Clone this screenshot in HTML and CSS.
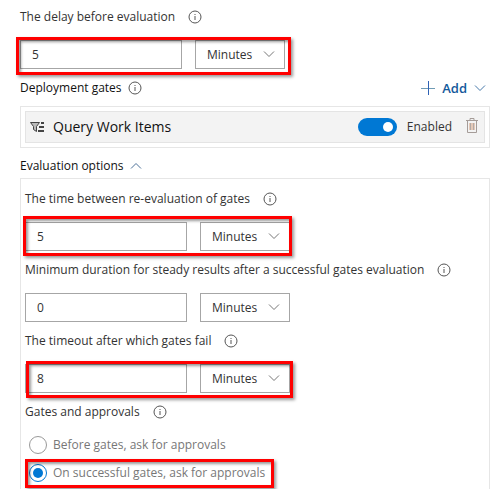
FILE: index.html
```html
<!DOCTYPE html>
<html lang="en">
<head>
<meta charset="utf-8">
<meta name="viewport" content="width=device-width, initial-scale=1">
<title>Deployment gates</title>
<link rel="stylesheet" href="styles.css">
</head>
<body>
<svg class="sprite" aria-hidden="true">
  <symbol id="info" viewBox="0 0 14 14">
    <circle cx="7" cy="7" r="6" fill="none" stroke="currentColor"/>
    <path d="M7 6v4M7 4v1" fill="none" stroke="currentColor"/>
  </symbol>
  <symbol id="chevron" viewBox="0 0 12 8">
    <path d="M1 1.5l5 5 5-5" fill="none" stroke="currentColor"/>
  </symbol>
</svg>
<main class="gates">
  <div class="field">
    <div class="field-label"><label for="delay">The delay before evaluation</label><svg class="info"><use href="#info"/></svg></div>
    <div class="controls">
      <input class="number" id="delay" type="text" value="5">
      <div class="unit"><select aria-label="Delay unit"><option>Minutes</option></select><svg class="chevron"><use href="#chevron"/></svg></div>
      <span class="highlight highlight-delay"></span>
    </div>
  </div>

  <section>
    <div class="section-head">
      <h2>Deployment gates</h2><svg class="info"><use href="#info"/></svg>
      <button class="add" type="button">
        <svg class="plus" viewBox="0 0 14 14"><path d="M0 7.5h14" stroke="#6f9bb5"/><path d="M7.5 0v14" stroke="#2f62b5"/></svg>
        <span>Add</span>
        <svg class="chevron"><use href="#chevron"/></svg>
      </button>
    </div>
    <div class="gate-list">
      <div class="gate">
        <svg class="query" viewBox="0 0 15 12"><path d="M0.500 1.500h9L6.500 5.500v5l-3-2v-3z" fill="#bbb" stroke="#444"/><path d="M11 2h3M9 6h5M8 10h6" fill="none" stroke="#444" stroke-width="2"/></svg>
        <span class="gate-name">Query Work Items</span>
        <input class="toggle" id="enabled" type="checkbox" role="switch" checked>
        <label for="enabled">Enabled</label>
        <button class="trash" type="button" aria-label="Delete gate">
          <svg viewBox="0 0 12 15"><path d="M0 2.500h12M4 2.500v-2h4v2M1.500 3v11.500h9V3" fill="none" stroke="#a59c98"/><path d="M3 5h6v7H3z" fill="#e5c9b8"/><path d="M4.500 5v7M7.500 5v7" stroke="#b3aaa5"/></svg>
        </button>
      </div>
    </div>
  </section>

  <section>
    <button class="collapse" type="button" aria-expanded="true">Evaluation options<svg class="chevron up"><use href="#chevron"/></svg></button>
    <div class="options">
      <div class="field">
        <div class="field-label"><label for="interval">The time between re-evaluation of gates</label><svg class="info"><use href="#info"/></svg></div>
        <div class="controls">
          <input class="number" id="interval" type="text" value="5">
          <div class="unit"><select aria-label="Interval unit"><option>Minutes</option></select><svg class="chevron"><use href="#chevron"/></svg></div>
          <span class="highlight highlight-interval"></span>
        </div>
      </div>
      <div class="field">
        <div class="field-label"><label for="steady">Minimum duration for steady results after a successful gates evaluation</label><svg class="info"><use href="#info"/></svg></div>
        <div class="controls">
          <input class="number" id="steady" type="text" value="0">
          <div class="unit"><select aria-label="Duration unit"><option>Minutes</option></select><svg class="chevron"><use href="#chevron"/></svg></div>
        </div>
      </div>
      <div class="field">
        <div class="field-label"><label for="timeout">The timeout after which gates fail</label><svg class="info"><use href="#info"/></svg></div>
        <div class="controls">
          <input class="number" id="timeout" type="text" value="8">
          <div class="unit"><select aria-label="Timeout unit"><option>Minutes</option></select><svg class="chevron"><use href="#chevron"/></svg></div>
          <span class="highlight highlight-timeout"></span>
        </div>
      </div>
      <div class="approvals" role="radiogroup" aria-labelledby="approvals-label">
        <div class="field-label"><span id="approvals-label">Gates and approvals</span><svg class="info"><use href="#info"/></svg></div>
        <div class="choice"><input id="before" type="radio" name="approvals"><label for="before">Before gates, ask for approvals</label></div>
        <div class="choice"><input id="after" type="radio" name="approvals" checked><label for="after">On successful gates, ask for approvals</label><span class="highlight highlight-choice"></span></div>
      </div>
    </div>
  </section>
</main>
</body>
</html>
```
FILE: styles.css
```css
* { box-sizing: border-box; }
body {
  margin: 0;
  background: #fff;
  color: #333;
  font: 12px/18px "Open Sans", "Noto Sans", sans-serif;
}
input, select, button { font: inherit; color: inherit; margin: 0; }
button { display: flex; align-items: center; padding: 0; border: 0; background: none; }
h2 { margin: 0; font-size: 12px; font-weight: 400; color: #111; }
.sprite { position: absolute; width: 0; height: 0; }
.gates { padding: 8px 4px 0 20px; }
.info { width: 14px; height: 14px; color: #555; }
.chevron { width: 12px; height: 8px; color: #777; }

.field { margin-bottom: 10px; }
.field-label { display: flex; align-items: center; gap: 13px; height: 18px; margin-bottom: 14px; }
.controls { position: relative; display: flex; gap: 13px; width: fit-content; }
.number {
  width: 162px;
  height: 29px;
  padding: 0 11px;
  border: 1px solid #a6a6a6;
  background: #fff;
}
.unit { position: relative; }
.unit select {
  display: block;
  width: 90px;
  height: 29px;
  padding: 0 11px;
  border: 1px solid #a6a6a6;
  border-radius: 0;
  background: #fff;
  appearance: none;
}
.unit .chevron { position: absolute; right: 10px; top: 10px; pointer-events: none; }

.highlight {
  position: absolute;
  border: 3px solid #ff0000;
  box-shadow: 2px 2px 3px rgba(0, 0, 0, .4), inset 2px 2px 3px rgba(0, 0, 0, .4);
  pointer-events: none;
}
.highlight-delay { inset: -3px -6px -6px -4px; }
.highlight-interval { inset: -6px -2px -5px -2px; }
.highlight-timeout { inset: -3px -3px -5px 1px; }
.highlight-choice { inset: -5px -9px -6px -4px; }

.section-head { display: flex; align-items: center; gap: 6px; height: 18px; margin-bottom: 9px; }
.add { gap: 7px; margin-left: auto; padding-right: 4px; color: #13599b; font-size: 13px; font-weight: 600; }
.add .chevron { color: #4779aa; }
.plus { width: 14px; height: 14px; }
.gate-list { padding: 4px; border: 1px solid #e6e6e6; }
.gate {
  display: flex;
  align-items: center;
  height: 32px;
  padding: 0 6px 0 4px;
  border: 1px solid #e4e4e4;
  background: #f3f3f3;
}
.query { width: 15px; height: 12px; margin-right: 8px; }
.gate-name { margin-right: auto; color: #111; font-size: 14px; }
.toggle {
  display: flex;
  align-items: center;
  justify-content: flex-end;
  width: 39px;
  height: 18px;
  margin-right: 10px;
  padding: 0 4px;
  border-radius: 9px;
  background: #0078d4;
  appearance: none;
}
.toggle::before { content: ""; width: 10px; height: 10px; border-radius: 50%; background: #fff; }
.trash { margin: 0 0 4px 14px; }
.trash svg { width: 12px; height: 15px; }

.collapse { gap: 6px; height: 18px; margin: 9px 0 3px; color: #111; }
.collapse .chevron { color: #4d7199; }
.up { transform: rotate(180deg); }
.options { padding: 11px 4px 7px; border: 1px solid #e6e6e6; border-bottom: 0; }
.approvals .field-label { margin-bottom: 15px; }
.choice {
  position: relative;
  display: flex;
  align-items: center;
  gap: 6px;
  width: fit-content;
  height: 18px;
  margin: 0 0 10px 4px;
  color: #777;
}
.choice:last-child { margin-bottom: 0; }
.choice input {
  display: grid;
  place-items: center;
  width: 18px;
  height: 18px;
  border: 1px solid #999;
  border-radius: 50%;
  background: #fff;
  appearance: none;
}
.choice input:checked { border-color: #0078d4; }
.choice input:checked::before { content: ""; width: 10px; height: 10px; border-radius: 50%; background: #0078d4; }
```
